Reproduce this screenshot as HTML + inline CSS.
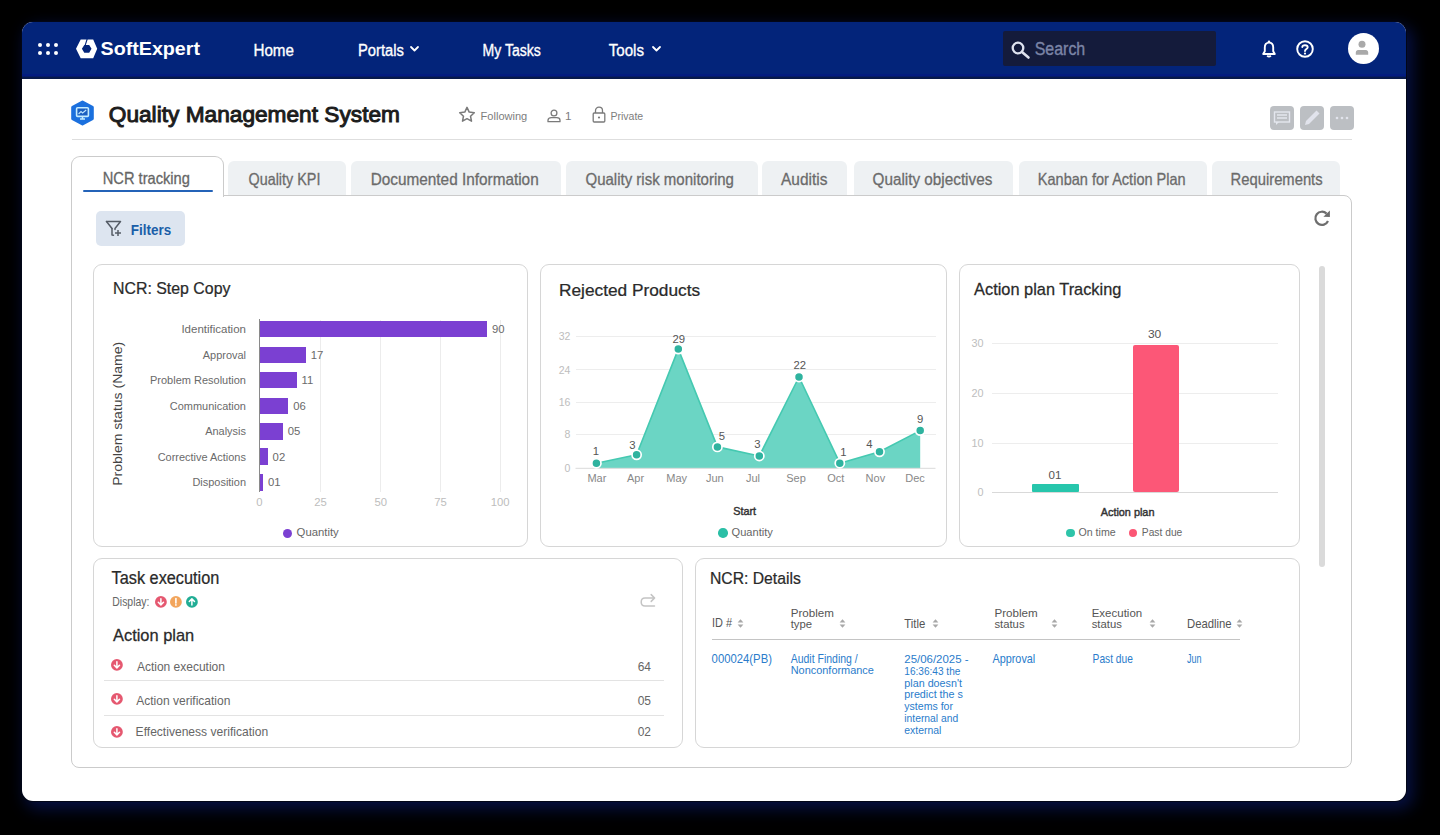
<!DOCTYPE html><html><head><meta charset="utf-8"><style>
*{margin:0;padding:0;box-sizing:border-box}
html,body{width:1440px;height:835px;overflow:hidden;background:#000;font-family:"Liberation Sans",sans-serif}
.t{position:absolute;white-space:nowrap;line-height:1;transform-origin:0 0}
.a{position:absolute}
svg{position:absolute;overflow:visible}
</style></head><body>

<div class="a" style="left:21.5px;top:21.5px;width:1384.7px;height:779.5px;border-radius:11px;background:#fff;box-shadow:0 0 0 1px #020617, 5px 6px 16px 2px rgba(8,22,90,0.75);overflow:hidden">
<div class="a" style="left:0;top:0;width:1385px;height:57.2px;background:linear-gradient(#03247a 0,#03247a 51.5px,#031c80 52px,#031c80 54.3px,#07194a 54.8px,#07194a 57.2px)"></div>
</div>
<div class="a" style="left:37.5px;top:43.0px;width:4.4px;height:4.4px;border-radius:50%;background:#fff"></div>
<div class="a" style="left:37.5px;top:51.0px;width:4.4px;height:4.4px;border-radius:50%;background:#fff"></div>
<div class="a" style="left:45.5px;top:43.0px;width:4.4px;height:4.4px;border-radius:50%;background:#fff"></div>
<div class="a" style="left:45.5px;top:51.0px;width:4.4px;height:4.4px;border-radius:50%;background:#fff"></div>
<div class="a" style="left:53.5px;top:43.0px;width:4.4px;height:4.4px;border-radius:50%;background:#fff"></div>
<div class="a" style="left:53.5px;top:51.0px;width:4.4px;height:4.4px;border-radius:50%;background:#fff"></div>
<svg style="left:76px;top:39px" width="22" height="20" viewBox="0 0 22 20"><path d="M0,9.8 L4.7,0.5 L17.2,0.5 L21.2,9.8 L17.2,19.2 L4.7,19.2 Z M5.9,9.8 L8.3,6 L13.2,6 L15.5,9.8 L13.2,13.8 L8.3,13.8 Z" fill="#fff" fill-rule="evenodd"/><path d="M11.2,0 L9.2,6.2" stroke="#03247a" stroke-width="1.1"/></svg>
<svg style="left:409.5px;top:46px" width="9" height="6" viewBox="0 0 9 6"><path d="M1 1 L4.5 4.5 L8 1" fill="none" stroke="#fff" stroke-width="1.8" stroke-linecap="round" stroke-linejoin="round"/></svg>
<svg style="left:651.5px;top:46px" width="9" height="6" viewBox="0 0 9 6"><path d="M1 1 L4.5 4.5 L8 1" fill="none" stroke="#fff" stroke-width="1.8" stroke-linecap="round" stroke-linejoin="round"/></svg>
<div class="a" style="left:1003px;top:31px;width:213px;height:35px;background:#141b3b;border-radius:2px"></div>
<svg style="left:1010.5px;top:40.5px" width="19" height="17" viewBox="0 0 19 17"><circle cx="7" cy="7" r="5.3" fill="none" stroke="#dfe3ef" stroke-width="2.3"/><path d="M11 11 L17.5 16.5" stroke="#dfe3ef" stroke-width="2.6" stroke-linecap="round"/></svg>
<svg style="left:1262px;top:40px" width="14" height="18" viewBox="0 0 14 18"><circle cx="7" cy="1.6" r="1.2" fill="#fff"/><path d="M7 2.6 C4.2 2.6 2.8 4.6 2.8 7.2 L2.8 11.2 L1.2 14 L12.8 14 L11.2 11.2 L11.2 7.2 C11.2 4.6 9.8 2.6 7 2.6 Z" fill="none" stroke="#fff" stroke-width="1.9" stroke-linejoin="round"/><path d="M5.2 15.6 Q7 17.8 8.8 15.6" fill="none" stroke="#fff" stroke-width="1.8"/></svg>
<svg style="left:1296px;top:40px" width="18" height="18" viewBox="0 0 18 18"><circle cx="9" cy="9" r="7.8" fill="none" stroke="#fff" stroke-width="1.9"/><path d="M6.3 7 C6.3 4.6 11.7 4.6 11.7 7.2 C11.7 9 9 9 9 11" fill="none" stroke="#fff" stroke-width="1.9" stroke-linecap="round"/><circle cx="9" cy="13.6" r="1.1" fill="#fff"/></svg>
<div class="a" style="left:1347.5px;top:33.3px;width:31px;height:31px;border-radius:50%;background:#fff"></div>
<svg style="left:1355px;top:40px" width="15" height="15" viewBox="0 0 15 15"><circle cx="7" cy="4.3" r="3.5" fill="#a9a9a9"/><path d="M0.8 14.8 L0.8 12.5 C0.8 10.5 2.5 10 4 10 L10 10 C11.5 10 13.2 10.5 13.2 12.5 L13.2 14.8 Z" fill="#a9a9a9"/></svg>
<svg style="left:70px;top:100px" width="25" height="26" viewBox="0 0 25 26"><path d="M12.5 2 L22.3 7.3 L22.3 18.7 L12.5 24 L2.7 18.7 L2.7 7.3 Z" fill="#1b70de" stroke="#1b70de" stroke-linejoin="round" stroke-width="3"/><rect x="6.6" y="7.8" width="11.8" height="8.6" rx="1" fill="#1a5fc0" stroke="#c4ecff" stroke-width="1.6"/><path d="M8.6 14 L11 11.6 L12.6 13 L16.2 10" fill="none" stroke="#bfe6ff" stroke-width="1.1"/><path d="M10 19 L15 19 M12.5 16.5 L12.5 19" stroke="#c4ecff" stroke-width="1.5"/></svg>
<svg style="left:457.5px;top:106px" width="18" height="17" viewBox="0 0 18 17"><path d="M9 1.4 L11.2 6.1 L16.3 6.7 L12.5 10.2 L13.5 15.2 L9 12.7 L4.5 15.2 L5.5 10.2 L1.7 6.7 L6.8 6.1 Z" fill="none" stroke="#7a7a7a" stroke-width="1.5" stroke-linejoin="round"/></svg>
<svg style="left:546.5px;top:108.5px" width="14" height="14" viewBox="0 0 14 14"><circle cx="7" cy="4" r="2.9" fill="none" stroke="#7a7a7a" stroke-width="1.3"/><path d="M1 12.7 L1 11.2 C1 9.3 2.6 8.6 4.3 8.6 L9.7 8.6 C11.4 8.6 13 9.3 13 11.2 L13 12.7 Z" fill="none" stroke="#7a7a7a" stroke-width="1.3" stroke-linejoin="round"/></svg>
<svg style="left:591.5px;top:106px" width="14" height="17" viewBox="0 0 14 17"><path d="M3.5 7 L3.5 4.7 C3.5 2.5 5 1.2 7 1.2 C9 1.2 10.5 2.5 10.5 4.7 L10.5 7" fill="none" stroke="#7a7a7a" stroke-width="1.3"/><rect x="1.2" y="7" width="11.6" height="9" rx="1" fill="none" stroke="#7a7a7a" stroke-width="1.3"/><circle cx="7" cy="11.5" r="1.1" fill="#7a7a7a"/></svg>
<div class="a" style="left:1270px;top:106px;width:24px;height:24px;border-radius:4px;background:#bcbfc3"></div>
<div class="a" style="left:1300px;top:106px;width:24px;height:24px;border-radius:4px;background:#bcbfc3"></div>
<div class="a" style="left:1329.5px;top:106px;width:24px;height:24px;border-radius:4px;background:#bcbfc3"></div>
<svg style="left:1270px;top:106px" width="24" height="24" viewBox="0 0 24 24"><rect x="4.5" y="6" width="15" height="10" fill="none" stroke="#e4e7ee" stroke-width="1.4"/><path d="M7 9 H17 M7 12 H17" stroke="#e4e7ee" stroke-width="1.4"/><path d="M6 16 L6 19 L9 16" fill="#e4e7ee"/></svg>
<svg style="left:1300px;top:106px" width="24" height="24" viewBox="0 0 24 24"><path d="M16.5 4.5 L19.5 7.5 L9 18 L5 19 L6 15 Z" fill="#e1e3ec"/></svg>
<svg style="left:1329.5px;top:106px" width="24" height="24" viewBox="0 0 24 24"><circle cx="7" cy="12" r="1.3" fill="#e1e3ec"/><circle cx="12" cy="12" r="1.3" fill="#e1e3ec"/><circle cx="17" cy="12" r="1.3" fill="#e1e3ec"/></svg>
<div class="a" style="left:72px;top:138.5px;width:1280px;height:1px;background:#dedede"></div>
<div class="a" style="left:227.7px;top:160.5px;width:118.8px;height:35px;background:#eef1f3;border-radius:6px 6px 0 0"></div>
<div class="a" style="left:350.8px;top:160.5px;width:210.2px;height:35px;background:#eef1f3;border-radius:6px 6px 0 0"></div>
<div class="a" style="left:565.6px;top:160.5px;width:192.1px;height:35px;background:#eef1f3;border-radius:6px 6px 0 0"></div>
<div class="a" style="left:762.4px;top:160.5px;width:84.6px;height:35px;background:#eef1f3;border-radius:6px 6px 0 0"></div>
<div class="a" style="left:853.7px;top:160.5px;width:159.6px;height:35px;background:#eef1f3;border-radius:6px 6px 0 0"></div>
<div class="a" style="left:1018.7px;top:160.5px;width:188.8px;height:35px;background:#eef1f3;border-radius:6px 6px 0 0"></div>
<div class="a" style="left:1211.8px;top:160.5px;width:128.2px;height:35px;background:#eef1f3;border-radius:6px 6px 0 0"></div>
<div class="a" style="left:71px;top:195px;width:1281px;height:573px;border:1.2px solid #cbcbcb;border-radius:0 8px 8px 8px"></div>
<div class="a" style="left:71px;top:156px;width:153px;height:41px;background:#fff;border:1.2px solid #cbcbcb;border-bottom:none;border-radius:9px 9px 0 0"></div>
<div class="a" style="left:82.5px;top:189.8px;width:130px;height:2.2px;background:#2463b8;border-radius:1px"></div>
<div class="a" style="left:96px;top:211px;width:89px;height:35px;background:#dde5f0;border-radius:5px"></div>
<svg style="left:105px;top:220px" width="18" height="17" viewBox="0 0 18 17"><path d="M1.5 1.5 L15.5 1.5 L10 8.5 L10 9.5 M7 8.5 L7 15 L8.5 15.2" fill="none" stroke="#555c66" stroke-width="1.5" stroke-linejoin="round" stroke-linecap="round"/><path d="M1.5 1.5 L7 8.5" fill="none" stroke="#555c66" stroke-width="1.5" stroke-linecap="round"/><path d="M10 13 H16 M13 10 V16" stroke="#555c66" stroke-width="1.5"/></svg>
<svg style="left:1313px;top:209px" width="18" height="18" viewBox="0 0 18 18"><path d="M15 12 A6.6 6.6 0 1 1 13.6 4.6" fill="none" stroke="#6e6e6e" stroke-width="2.2"/><path d="M16.9 1.4 L16.9 8.1 L10.4 7.7 Z" fill="#6e6e6e"/></svg>
<div class="a" style="left:1319px;top:265.5px;width:6px;height:301px;background:#dadada;border-radius:3px"></div>
<div class="a" style="left:92.5px;top:264px;width:435.0px;height:283.0px;border:1.2px solid #d6d6d6;border-radius:9px"></div>
<div class="a" style="left:540px;top:264px;width:406.8px;height:283.0px;border:1.2px solid #d6d6d6;border-radius:9px"></div>
<div class="a" style="left:958.8px;top:264px;width:341.4px;height:283.0px;border:1.2px solid #d6d6d6;border-radius:9px"></div>
<div class="a" style="left:92.5px;top:557.5px;width:590.5px;height:190.0px;border:1.2px solid #d6d6d6;border-radius:9px"></div>
<div class="a" style="left:695.3px;top:557.5px;width:604.9px;height:190.0px;border:1.2px solid #d6d6d6;border-radius:9px"></div>
<div class="a" style="left:319.90px;top:320px;width:1px;height:172px;background:#ececec"></div>
<div class="a" style="left:380.25px;top:320px;width:1px;height:172px;background:#ececec"></div>
<div class="a" style="left:440.10px;top:320px;width:1px;height:172px;background:#ececec"></div>
<div class="a" style="left:499.70px;top:320px;width:1px;height:172px;background:#ececec"></div>
<div class="a" style="left:259.5px;top:320.60px;width:227.40px;height:16.60px;background:#7b40d2"></div>
<div class="a" style="left:259.5px;top:346.50px;width:46.30px;height:16.30px;background:#7b40d2"></div>
<div class="a" style="left:259.5px;top:371.60px;width:37.00px;height:16.90px;background:#7b40d2"></div>
<div class="a" style="left:259.5px;top:397.50px;width:28.70px;height:16.30px;background:#7b40d2"></div>
<div class="a" style="left:259.5px;top:423.00px;width:23.20px;height:16.50px;background:#7b40d2"></div>
<div class="a" style="left:259.5px;top:448.30px;width:8.10px;height:16.70px;background:#7b40d2"></div>
<div class="a" style="left:259.5px;top:474.00px;width:3.50px;height:16.50px;background:#7b40d2"></div>
<div class="a" style="left:259px;top:319px;width:1px;height:173px;background:#8a8a8a"></div>
<div class="a" style="left:283px;top:528.5px;width:9px;height:9px;border-radius:50%;background:#7b40d2"></div>
<div class="a" style="left:575.5px;top:335.80px;width:360px;height:1px;background:#ededed"></div>
<div class="a" style="left:575.5px;top:369.40px;width:360px;height:1px;background:#ededed"></div>
<div class="a" style="left:575.5px;top:402.00px;width:360px;height:1px;background:#ededed"></div>
<div class="a" style="left:575.5px;top:433.50px;width:360px;height:1px;background:#ededed"></div>
<svg style="left:540px;top:264px" width="407" height="283" viewBox="0 0 407 283"><polygon points="56.4,199.2 96.6,190.8 138.3,85.1 177.4,182.9 219.3,192.0 259.0,113.0 299.8,199.2 339.5,187.8 380.2,166.6 380.2,204.3 56.4,204.3" fill="#6bd5c4"/><line x1="35.5" y1="204.3" x2="395.5" y2="204.3" stroke="#dadada" stroke-width="1"/><polyline points="56.4,199.2 96.6,190.8 138.3,85.1 177.4,182.9 219.3,192.0 259.0,113.0 299.8,199.2 339.5,187.8 380.2,166.6" fill="none" stroke="#45c9b1" stroke-width="1.6" stroke-linejoin="round"/><circle cx="56.4" cy="199.2" r="4.6" fill="#2fb39f" stroke="#fff" stroke-width="1.7"/><circle cx="96.6" cy="190.8" r="4.6" fill="#2fb39f" stroke="#fff" stroke-width="1.7"/><circle cx="138.3" cy="85.1" r="4.6" fill="#2fb39f" stroke="#fff" stroke-width="1.7"/><circle cx="177.4" cy="182.9" r="4.6" fill="#2fb39f" stroke="#fff" stroke-width="1.7"/><circle cx="219.3" cy="192.0" r="4.6" fill="#2fb39f" stroke="#fff" stroke-width="1.7"/><circle cx="259.0" cy="113.0" r="4.6" fill="#2fb39f" stroke="#fff" stroke-width="1.7"/><circle cx="299.8" cy="199.2" r="4.6" fill="#2fb39f" stroke="#fff" stroke-width="1.7"/><circle cx="339.5" cy="187.8" r="4.6" fill="#2fb39f" stroke="#fff" stroke-width="1.7"/><circle cx="380.2" cy="166.6" r="4.6" fill="#2fb39f" stroke="#fff" stroke-width="1.7"/></svg>
<div class="a" style="left:718px;top:528.4px;width:9.5px;height:9.5px;border-radius:50%;background:#2bbfa6"></div>
<div class="a" style="left:991.8px;top:343.20px;width:286px;height:1px;background:#ededed"></div>
<div class="a" style="left:991.8px;top:392.80px;width:286px;height:1px;background:#ededed"></div>
<div class="a" style="left:991.8px;top:442.60px;width:286px;height:1px;background:#ededed"></div>
<div class="a" style="left:991.8px;top:491.90px;width:286px;height:1px;background:#d9d9d9"></div>
<div class="a" style="left:1031.6px;top:483.8px;width:47.1px;height:8.6px;background:#27c6ac;border-radius:1px"></div>
<div class="a" style="left:1132.5px;top:344.8px;width:46.5px;height:147.2px;background:#fc5777;border-radius:2px"></div>
<div class="a" style="left:1066.3px;top:528.5px;width:8.6px;height:8.6px;border-radius:50%;background:#2ec4a9"></div>
<div class="a" style="left:1128.9px;top:528.5px;width:8.6px;height:8.6px;border-radius:50%;background:#fb5674"></div>
<svg style="left:154.70px;top:595.90px" width="11.8" height="11.8" viewBox="0 0 11.8 11.8"><circle cx="5.9" cy="5.9" r="5.9" fill="#e55870"/><path d="M5.9 2.7 V8.5 M3.3000000000000003 6.300000000000001 L5.9 8.9 L8.5 6.300000000000001" fill="none" stroke="#fff" stroke-width="1.5" stroke-linecap="round" stroke-linejoin="round"/></svg>
<svg style="left:170.00px;top:595.90px" width="11.8" height="11.8" viewBox="0 0 11.8 11.8"><circle cx="5.9" cy="5.9" r="5.9" fill="#f2a55c"/><path d="M5.9 2.6000000000000005 V7.1000000000000005" stroke="#fff" stroke-width="1.6" stroke-linecap="round"/><circle cx="5.9" cy="8.9" r="0.9" fill="#fff"/></svg>
<svg style="left:185.90px;top:595.90px" width="11.8" height="11.8" viewBox="0 0 11.8 11.8"><circle cx="5.9" cy="5.9" r="5.9" fill="#21ad95"/><path d="M5.9 9.100000000000001 V3.3000000000000003 M3.3000000000000003 5.5 L5.9 2.9000000000000004 L8.5 5.5" fill="none" stroke="#fff" stroke-width="1.5" stroke-linecap="round" stroke-linejoin="round"/></svg>
<svg style="left:638px;top:591px" width="20" height="18" viewBox="0 0 20 18"><path d="M16.5 7 H7 Q3.2 7 3.2 11 Q3.2 15 7 15 H16.5 M13.2 3.6 L16.6 7 L13.2 10.4" fill="none" stroke="#c4c4c4" stroke-width="1.5" stroke-linecap="round" stroke-linejoin="round"/></svg>
<svg style="left:111.20px;top:659.40px" width="11.8" height="11.8" viewBox="0 0 11.8 11.8"><circle cx="5.9" cy="5.9" r="5.9" fill="#e55870"/><path d="M5.9 2.7 V8.5 M3.3000000000000003 6.300000000000001 L5.9 8.9 L8.5 6.300000000000001" fill="none" stroke="#fff" stroke-width="1.5" stroke-linecap="round" stroke-linejoin="round"/></svg>
<svg style="left:111.20px;top:693.30px" width="11.8" height="11.8" viewBox="0 0 11.8 11.8"><circle cx="5.9" cy="5.9" r="5.9" fill="#e55870"/><path d="M5.9 2.7 V8.5 M3.3000000000000003 6.300000000000001 L5.9 8.9 L8.5 6.300000000000001" fill="none" stroke="#fff" stroke-width="1.5" stroke-linecap="round" stroke-linejoin="round"/></svg>
<svg style="left:111.20px;top:725.70px" width="11.8" height="11.8" viewBox="0 0 11.8 11.8"><circle cx="5.9" cy="5.9" r="5.9" fill="#e55870"/><path d="M5.9 2.7 V8.5 M3.3000000000000003 6.300000000000001 L5.9 8.9 L8.5 6.300000000000001" fill="none" stroke="#fff" stroke-width="1.5" stroke-linecap="round" stroke-linejoin="round"/></svg>
<div class="a" style="left:104px;top:679.7px;width:560px;height:1px;background:#e3e3e3"></div>
<div class="a" style="left:104px;top:714.9px;width:560px;height:1px;background:#e3e3e3"></div>
<svg style="left:737.40px;top:619.10px" width="7" height="9" viewBox="0 0 7 9"><path d="M0.6 3.4 L3.5 0.3 L6.4 3.4 Z M0.6 5.6 L3.5 8.7 L6.4 5.6 Z" fill="#a8a8a8"/></svg>
<svg style="left:839.30px;top:619.10px" width="7" height="9" viewBox="0 0 7 9"><path d="M0.6 3.4 L3.5 0.3 L6.4 3.4 Z M0.6 5.6 L3.5 8.7 L6.4 5.6 Z" fill="#a8a8a8"/></svg>
<svg style="left:931.80px;top:619.10px" width="7" height="9" viewBox="0 0 7 9"><path d="M0.6 3.4 L3.5 0.3 L6.4 3.4 Z M0.6 5.6 L3.5 8.7 L6.4 5.6 Z" fill="#a8a8a8"/></svg>
<svg style="left:1050.60px;top:619.10px" width="7" height="9" viewBox="0 0 7 9"><path d="M0.6 3.4 L3.5 0.3 L6.4 3.4 Z M0.6 5.6 L3.5 8.7 L6.4 5.6 Z" fill="#a8a8a8"/></svg>
<svg style="left:1149.00px;top:619.10px" width="7" height="9" viewBox="0 0 7 9"><path d="M0.6 3.4 L3.5 0.3 L6.4 3.4 Z M0.6 5.6 L3.5 8.7 L6.4 5.6 Z" fill="#a8a8a8"/></svg>
<svg style="left:1235.50px;top:619.10px" width="7" height="9" viewBox="0 0 7 9"><path d="M0.6 3.4 L3.5 0.3 L6.4 3.4 Z M0.6 5.6 L3.5 8.7 L6.4 5.6 Z" fill="#a8a8a8"/></svg>
<div class="a" style="left:711.6px;top:639.3px;width:528px;height:1.2px;background:#c4c4c4"></div>
<svg class="a" style="left:0;top:0" width="1440" height="835" font-family="Liberation Sans"><text transform="translate(100.50,54.70) scale(1.0259,1)" font-size="19.19" fill="#fff" font-weight="bold">SoftExpert</text><text transform="translate(253.40,55.60) scale(0.9019,1)" font-size="16.86" fill="#fff" stroke="#fff" stroke-width="0.35">Home</text><text transform="translate(358.00,55.60) scale(0.8773,1)" font-size="16.86" fill="#fff" stroke="#fff" stroke-width="0.35">Portals</text><text transform="translate(482.50,55.60) scale(0.8361,1)" font-size="16.86" fill="#fff" stroke="#fff" stroke-width="0.35">My Tasks</text><text transform="translate(608.75,55.60) scale(0.8966,1)" font-size="16.86" fill="#fff" stroke="#fff" stroke-width="0.35">Tools</text><text transform="translate(1034.70,55.00) scale(0.9152,1)" font-size="17.44" fill="#7b84a6" stroke="#7b84a6" stroke-width="0.35">Search</text><text transform="translate(108.75,122.00) scale(0.9940,1)" font-size="22.82" fill="#1c1c1c" stroke="#1c1c1c" stroke-width="1.0">Quality Management System</text><text transform="translate(480.60,119.70) scale(0.9506,1)" font-size="11.63" fill="#7d7d7d">Following</text><text transform="translate(565.00,119.70)" font-size="11.63" fill="#7d7d7d">1</text><text transform="translate(610.40,119.70) scale(0.9070,1)" font-size="11.63" fill="#7d7d7d">Private</text><text transform="translate(102.70,183.50) scale(0.8785,1)" font-size="16.72" fill="#666" stroke="#666" stroke-width="0.3">NCR tracking</text><text transform="translate(248.50,184.50) scale(0.8603,1)" font-size="16.72" fill="#6b6b6b" stroke="#6b6b6b" stroke-width="0.3">Quality KPI</text><text transform="translate(370.70,184.50) scale(0.9173,1)" font-size="16.72" fill="#6b6b6b" stroke="#6b6b6b" stroke-width="0.3">Documented Information</text><text transform="translate(585.50,184.50) scale(0.8983,1)" font-size="16.72" fill="#6b6b6b" stroke="#6b6b6b" stroke-width="0.3">Quality risk monitoring</text><text transform="translate(781.00,184.50) scale(0.9253,1)" font-size="16.72" fill="#6b6b6b" stroke="#6b6b6b" stroke-width="0.3">Auditis</text><text transform="translate(872.50,184.50) scale(0.9148,1)" font-size="16.72" fill="#6b6b6b" stroke="#6b6b6b" stroke-width="0.3">Quality objectives</text><text transform="translate(1037.80,184.50) scale(0.8702,1)" font-size="16.72" fill="#6b6b6b" stroke="#6b6b6b" stroke-width="0.3">Kanban for Action Plan</text><text transform="translate(1230.60,184.50) scale(0.8851,1)" font-size="16.72" fill="#6b6b6b" stroke="#6b6b6b" stroke-width="0.3">Requirements</text><text transform="translate(130.80,234.60) scale(0.8762,1)" font-size="15.41" fill="#1a5ea8" font-weight="bold">Filters</text><text transform="translate(113.00,294.40) scale(0.9398,1)" font-size="16.93" fill="#2a2a2a" stroke="#2a2a2a" stroke-width="0.25">NCR: Step Copy</text><text transform="translate(117.60,413.80) rotate(-90) translate(-72.00,4.64) scale(1.0376,1)" font-size="13.5" fill="#444">Problem status (Name)</text><text transform="translate(181.40,332.90) scale(1.0181,1)" font-size="11.30" fill="#6a6a6a">Identification</text><text transform="translate(491.90,332.90)" font-size="11.30" fill="#6a6a6a">90</text><text transform="translate(202.76,358.65) scale(0.9700,1)" font-size="11.30" fill="#6a6a6a">Approval</text><text transform="translate(310.80,358.65)" font-size="11.30" fill="#6a6a6a">17</text><text transform="translate(150.00,384.05) scale(0.9737,1)" font-size="11.30" fill="#6a6a6a">Problem Resolution</text><text transform="translate(301.50,384.05)" font-size="11.30" fill="#6a6a6a">11</text><text transform="translate(169.82,409.65) scale(0.9700,1)" font-size="11.30" fill="#6a6a6a">Communication</text><text transform="translate(293.20,409.65)" font-size="11.30" fill="#6a6a6a">06</text><text transform="translate(205.17,435.25) scale(0.9700,1)" font-size="11.30" fill="#6a6a6a">Analysis</text><text transform="translate(287.70,435.25)" font-size="11.30" fill="#6a6a6a">05</text><text transform="translate(157.65,460.65) scale(0.9700,1)" font-size="11.30" fill="#6a6a6a">Corrective Actions</text><text transform="translate(272.60,460.65)" font-size="11.30" fill="#6a6a6a">02</text><text transform="translate(192.40,486.25) scale(0.9700,1)" font-size="11.30" fill="#6a6a6a">Disposition</text><text transform="translate(268.00,486.25)" font-size="11.30" fill="#6a6a6a">01</text><text transform="translate(256.36,505.60)" font-size="11.30" fill="#bdbdbd">0</text><text transform="translate(314.13,505.60)" font-size="11.30" fill="#bdbdbd">25</text><text transform="translate(374.48,505.60)" font-size="11.30" fill="#bdbdbd">50</text><text transform="translate(434.33,505.60)" font-size="11.30" fill="#bdbdbd">75</text><text transform="translate(490.76,505.60)" font-size="11.30" fill="#bdbdbd">100</text><text transform="translate(296.60,536.00) scale(1.0256,1)" font-size="11.05" fill="#666">Quantity</text><text transform="translate(559.00,296.00) scale(1.0430,1)" font-size="16.57" fill="#2a2a2a" stroke="#2a2a2a" stroke-width="0.25">Rejected Products</text><text transform="translate(558.75,339.90)" font-size="10.50" fill="#bdbdbd">32</text><text transform="translate(558.75,373.50)" font-size="10.50" fill="#bdbdbd">24</text><text transform="translate(558.75,406.10)" font-size="10.50" fill="#bdbdbd">16</text><text transform="translate(564.57,437.60)" font-size="10.50" fill="#bdbdbd">8</text><text transform="translate(564.57,471.90)" font-size="10.50" fill="#bdbdbd">0</text><text transform="translate(592.66,455.30)" font-size="11.30" fill="#555">1</text><text transform="translate(629.36,448.50)" font-size="11.30" fill="#555">3</text><text transform="translate(672.43,342.60)" font-size="11.30" fill="#555">29</text><text transform="translate(718.86,440.40)" font-size="11.30" fill="#555">5</text><text transform="translate(754.16,448.10)" font-size="11.30" fill="#555">3</text><text transform="translate(793.43,369.10)" font-size="11.30" fill="#555">22</text><text transform="translate(840.36,455.90)" font-size="11.30" fill="#555">1</text><text transform="translate(866.16,448.10)" font-size="11.30" fill="#555">4</text><text transform="translate(917.06,423.10)" font-size="11.30" fill="#555">9</text><text transform="translate(587.39,481.90)" font-size="11.00" fill="#888">Mar</text><text transform="translate(626.95,481.90)" font-size="11.00" fill="#888">Apr</text><text transform="translate(666.31,481.90)" font-size="11.00" fill="#888">May</text><text transform="translate(705.89,481.90)" font-size="11.00" fill="#888">Jun</text><text transform="translate(745.96,481.90)" font-size="11.00" fill="#888">Jul</text><text transform="translate(786.21,481.90)" font-size="11.00" fill="#888">Sep</text><text transform="translate(827.15,481.90)" font-size="11.00" fill="#888">Oct</text><text transform="translate(865.61,481.90)" font-size="11.00" fill="#888">Nov</text><text transform="translate(905.21,481.90)" font-size="11.00" fill="#888">Dec</text><text transform="translate(733.20,514.90) scale(0.9218,1)" font-size="11.77" fill="#333" stroke="#333" stroke-width="0.45">Start</text><text transform="translate(731.60,536.25) scale(1.0521,1)" font-size="10.54" fill="#666">Quantity</text><text transform="translate(974.10,294.80) scale(1.0146,1)" font-size="16.13" fill="#2a2a2a" stroke="#2a2a2a" stroke-width="0.25">Action plan Tracking</text><text transform="translate(971.51,347.40)" font-size="10.80" fill="#bdbdbd">30</text><text transform="translate(971.51,397.00)" font-size="10.80" fill="#bdbdbd">20</text><text transform="translate(971.51,446.80)" font-size="10.80" fill="#bdbdbd">10</text><text transform="translate(977.51,496.10)" font-size="10.80" fill="#bdbdbd">0</text><text transform="translate(1048.56,478.90)" font-size="11.60" fill="#555">01</text><text transform="translate(1147.95,338.00) scale(1.0329,1)" font-size="11.60" fill="#555">30</text><text transform="translate(1100.70,515.80) scale(0.9370,1)" font-size="11.60" fill="#333" stroke="#333" stroke-width="0.45">Action plan</text><text transform="translate(1078.50,536.30) scale(0.9750,1)" font-size="10.90" fill="#666">On time</text><text transform="translate(1141.80,536.30) scale(0.9417,1)" font-size="10.90" fill="#666">Past due</text><text transform="translate(111.60,583.80) scale(0.9190,1)" font-size="17.73" fill="#2a2a2a" stroke="#2a2a2a" stroke-width="0.25">Task execution</text><text transform="translate(112.30,606.00) scale(0.8447,1)" font-size="12.35" fill="#666">Display:</text><text transform="translate(113.00,641.40) scale(1.0463,1)" font-size="15.70" fill="#2a2a2a" stroke="#2a2a2a" stroke-width="0.25">Action plan</text><text transform="translate(136.90,671.00) scale(0.9384,1)" font-size="12.79" fill="#666">Action execution</text><text transform="translate(637.70,671.00) scale(0.9368,1)" font-size="12.79" fill="#666">64</text><text transform="translate(136.20,704.70) scale(0.9400,1)" font-size="12.79" fill="#666">Action verification</text><text transform="translate(637.70,704.70) scale(0.9368,1)" font-size="12.79" fill="#666">05</text><text transform="translate(135.60,735.55) scale(0.9444,1)" font-size="12.79" fill="#666">Effectiveness verification</text><text transform="translate(637.70,735.55) scale(0.9368,1)" font-size="12.79" fill="#666">02</text><text transform="translate(710.00,584.00) scale(0.9169,1)" font-size="17.15" fill="#2a2a2a" stroke="#2a2a2a" stroke-width="0.25">NCR: Details</text><text transform="translate(712.00,627.10) scale(0.9190,1)" font-size="11.92" fill="#555">ID #</text><text transform="translate(790.70,616.50) scale(1.0253,1)" font-size="11.34" fill="#555">Problem</text><text transform="translate(790.70,627.50)" font-size="11.30" fill="#555">type</text><text transform="translate(904.30,627.60) scale(0.9569,1)" font-size="11.92" fill="#555">Title</text><text transform="translate(994.40,616.50) scale(1.0253,1)" font-size="11.34" fill="#555">Problem</text><text transform="translate(994.40,627.50)" font-size="11.30" fill="#555">status</text><text transform="translate(1091.70,616.50) scale(1.0147,1)" font-size="11.34" fill="#555">Execution</text><text transform="translate(1091.70,627.50)" font-size="11.30" fill="#555">status</text><text transform="translate(1187.00,627.60) scale(0.9507,1)" font-size="11.92" fill="#555">Deadline</text><text transform="translate(711.60,663.00) scale(0.9499,1)" font-size="11.92" fill="#2a7ccb">000024(PB)</text><text transform="translate(790.70,663.00) scale(0.8804,1)" font-size="11.92" fill="#2a7ccb">Audit Finding /</text><text transform="translate(790.70,674.00) scale(0.9649,1)" font-size="11.34" fill="#2a7ccb">Nonconformance</text><text transform="translate(904.30,663.00) scale(0.9872,1)" font-size="11.60" fill="#2a7ccb">25/06/2025 -</text><text transform="translate(904.30,674.82) scale(0.8698,1)" font-size="11.60" fill="#2a7ccb">16:36:43 the</text><text transform="translate(904.30,686.64) scale(0.9280,1)" font-size="11.60" fill="#2a7ccb">plan doesn't</text><text transform="translate(904.30,698.46) scale(0.9294,1)" font-size="11.60" fill="#2a7ccb">predict the s</text><text transform="translate(904.30,710.28) scale(0.9107,1)" font-size="11.60" fill="#2a7ccb">ystems for</text><text transform="translate(904.30,722.10) scale(0.8893,1)" font-size="11.60" fill="#2a7ccb">internal and</text><text transform="translate(904.30,733.92) scale(0.8960,1)" font-size="11.60" fill="#2a7ccb">external</text><text transform="translate(992.50,663.00) scale(0.9103,1)" font-size="11.92" fill="#2a7ccb">Approval</text><text transform="translate(1092.60,663.00) scale(0.8571,1)" font-size="11.92" fill="#2a7ccb">Past due</text><text transform="translate(1187.00,663.00) scale(0.7556,1)" font-size="11.92" fill="#2a7ccb">Jun</text></svg>
</body></html>
